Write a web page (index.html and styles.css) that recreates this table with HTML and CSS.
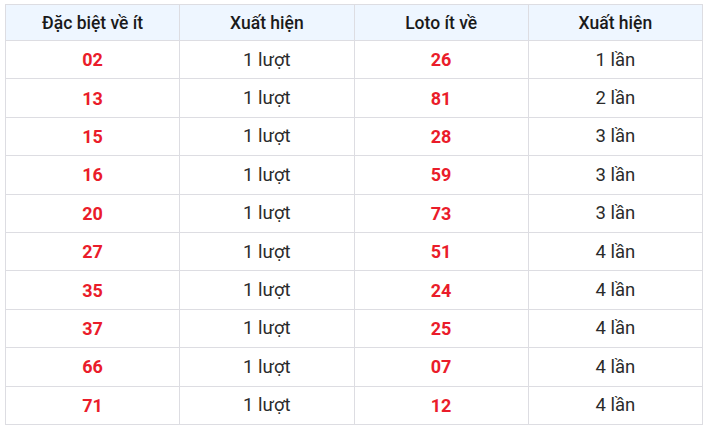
FILE: index.html
```html
<!DOCTYPE html>
<html lang="vi">
<head>
<meta charset="utf-8">
<link rel="stylesheet" href="styles.css">
</head>
<body>
<table class="stats">
  <thead>
    <tr><th>Đặc biệt về ít</th><th>Xuất hiện</th><th>Loto ít về</th><th>Xuất hiện</th></tr>
  </thead>
  <tbody>
    <tr><td class="num">02</td><td>1 lượt</td><td class="num">26</td><td>1 lần</td></tr>
    <tr><td class="num">13</td><td>1 lượt</td><td class="num">81</td><td>2 lần</td></tr>
    <tr><td class="num">15</td><td>1 lượt</td><td class="num">28</td><td>3 lần</td></tr>
    <tr><td class="num">16</td><td>1 lượt</td><td class="num">59</td><td>3 lần</td></tr>
    <tr><td class="num">20</td><td>1 lượt</td><td class="num">73</td><td>3 lần</td></tr>
    <tr><td class="num">27</td><td>1 lượt</td><td class="num">51</td><td>4 lần</td></tr>
    <tr><td class="num">35</td><td>1 lượt</td><td class="num">24</td><td>4 lần</td></tr>
    <tr><td class="num">37</td><td>1 lượt</td><td class="num">25</td><td>4 lần</td></tr>
    <tr><td class="num">66</td><td>1 lượt</td><td class="num">07</td><td>4 lần</td></tr>
    <tr><td class="num">71</td><td>1 lượt</td><td class="num">12</td><td>4 lần</td></tr>
  </tbody>
</table>
</body>
</html>
```

FILE: styles.css
```css
html, body {
  margin: 0;
  padding: 0;
  background: #ffffff;
}
body {
  padding: 4px 11px 0 5px;
  font-family: Roboto, "Noto Sans", sans-serif;
  color: #222;
}
.stats {
  width: 698px;
  border-collapse: collapse;
  table-layout: fixed;
}
.stats th, .stats td {
  border: 1px solid #dddde2;
  text-align: center;
  padding: 0;
}
.stats th {
  height: 35px;
  background: #eef6ff;
  font-weight: 500;
  font-size: 17.5px;
  color: #1a1a1a;
}
.stats td {
  height: 37.4px;
  font-size: 18.5px;
  color: #2b2b2b;
}
.stats td.num {
  font-weight: 700;
  font-size: 18px;
  color: #ea1c2a;
}
```
